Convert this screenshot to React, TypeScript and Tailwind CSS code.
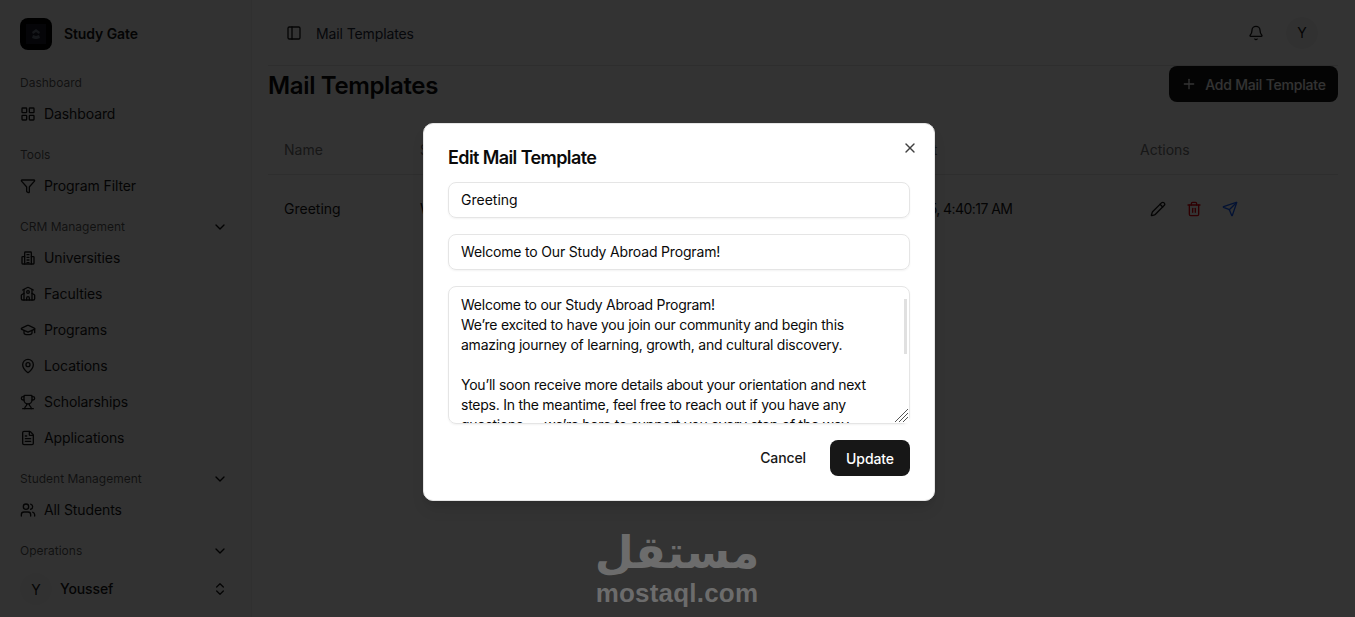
import React from "react";
import {
  Bell, ChevronDown, ChevronsUpDown, FileText, Funnel, GraduationCap, LayoutGrid, MapPin,
  PanelLeft, Pencil, Plus, School, Send, Trash2, Trophy, Users, X,
} from "lucide-react";

const font = "font-['Inter','Liberation_Sans',sans-serif]";

function UniversityIcon({ size = 16 }: { size?: number }) {
  return (
    <svg width={size} height={size} viewBox="0 0 24 24" fill="none" stroke="currentColor" strokeWidth="2" strokeLinecap="round" strokeLinejoin="round">
      <path d="M7 21V4a1 1 0 0 1 1-1h8a1 1 0 0 1 1 1v17" />
      <path d="M7 10H4a1 1 0 0 0-1 1v9a1 1 0 0 0 1 1h16a1 1 0 0 0 1-1v-9a1 1 0 0 0-1-1h-3" />
      <path d="M10.5 7h3M10.5 11h3M10.5 15h3M10.5 19h3" />
    </svg>
  );
}

function Label({ text, chevron }: { text: string; chevron?: boolean }) {
  return (
    <div className="flex h-[26px] items-center justify-between pr-[23px] text-[12px] text-[#0a0a0a]/70">
      <span>{text}</span>
      {chevron && <ChevronDown size={16} strokeWidth={2} className="text-[#0a0a0a]" />}
    </div>
  );
}

function Item({ icon: Icon, text }: { icon: any; text: string }) {
  return (
    <div className="flex h-9 items-center gap-2 text-[14px] text-[#171717]">
      <Icon size={16} strokeWidth={2} />
      <span className="mb-px tracking-[-0.1px]">{text}</span>
    </div>
  );
}

function Sidebar() {
  return (
    <aside className="flex h-full w-[252px] shrink-0 flex-col border-r border-[#f0f0f0] bg-[#fafafa] pl-5">
      <div className="flex h-[70px] items-center gap-3 pb-[2px]">
        <div className="flex h-8 w-8 items-center justify-center rounded-lg bg-black">
          <svg width="20" height="20" viewBox="0 0 20 20">
            <rect width="20" height="20" fill="#1a1d2b" />
            <path d="M10 5l4 3-1 2-3-2-3 2-1-2zM7 11l3 1 3-1 1 3-3 1h-2l-3-1z" fill="#6b7280" />
          </svg>
        </div>
        <span className="mb-[2px] text-[14px] font-semibold tracking-[-0.1px] text-[#171717]">Study Gate</span>
      </div>
      <div className="flex flex-1 flex-col gap-[10px] overflow-hidden">
        <section>
          <Label text="Dashboard" />
          <Item icon={LayoutGrid} text="Dashboard" />
        </section>
        <section>
          <Label text="Tools" />
          <Item icon={Funnel} text="Program Filter" />
        </section>
        <section>
          <Label text="CRM Management" chevron />
          <Item icon={UniversityIcon} text="Universities" />
          <Item icon={School} text="Faculties" />
          <Item icon={GraduationCap} text="Programs" />
          <Item icon={MapPin} text="Locations" />
          <Item icon={Trophy} text="Scholarships" />
          <Item icon={FileText} text="Applications" />
        </section>
        <section>
          <Label text="Student Management" chevron />
          <Item icon={Users} text="All Students" />
        </section>
        <section>
          <Label text="Operations" chevron />
        </section>
      </div>
      <div className="mb-3 flex h-8 items-center pr-[23px]">
        <div className="flex h-8 w-8 items-center justify-center rounded-full bg-[#f5f5f5] text-[14px] text-[#171717]">Y</div>
        <span className="mb-px ml-2 flex-1 text-[14px] font-medium tracking-[-0.1px] text-[#171717]">Youssef</span>
        <ChevronsUpDown size={16} className="text-[#171717]" />
      </div>
    </aside>
  );
}

function Main() {
  return (
    <main className="flex min-w-0 flex-1 flex-col pl-4 pr-[17px]">
      <header className="flex h-[66px] shrink-0 items-center border-b border-[#e5e5e5] pl-[18px] pr-5">
        <PanelLeft size={16} className="text-[#171717]" />
        <span className="ml-[14px] mt-[2px] flex-1 text-[14px] tracking-[-0.11px] text-[#1e2939]">Mail Templates</span>
        <Bell size={16} className="mr-[22px] text-[#171717]" />
        <div className="flex h-8 w-8 items-center justify-center rounded-full bg-[#f5f5f5] text-[14px] text-[#171717]">Y</div>
      </header>
      <div className="flex h-[36px] items-center justify-between">
        <h1 className="mt-[3px] text-[24px] font-semibold tracking-[-0.35px] text-[#0a0a0a]">Mail Templates</h1>
        <button className="flex h-9 w-[169px] items-center justify-center gap-2 rounded-lg bg-[#171717] text-[14px] font-medium tracking-[-0.2px] text-white">
          <Plus size={16} />
          Add Mail Template
        </button>
      </div>
      <table className="mt-[24px] w-full table-fixed text-left text-[14px]">
        <colgroup>
          <col className="w-[136px]" />
          <col className="w-[454px]" />
          <col className="w-[266px]" />
          <col />
        </colgroup>
        <thead>
          <tr className="h-[48px] border-b border-[#e5e5e5] text-[#737373]">
            <th className="px-4 font-normal">Name</th>
            <th className="px-4 font-normal">Subject</th>
            <th className="px-4 font-normal tracking-[-0.8px]">Created At</th>
            <th className="px-4 font-normal">Actions</th>
          </tr>
        </thead>
        <tbody>
          <tr className="h-[70px] text-[#171717]">
            <td className="px-4 pb-[2px]">Greeting</td>
            <td className="px-4 pb-[2px]">Welcome to Our Study Abroad Program!</td>
            <td className="px-4 pb-[2px] tracking-[-0.55px]">10/5/2025, 4:40:17 AM</td>
            <td className="px-4">
              <div className="flex">
                <span className="flex h-9 w-9 items-center justify-center"><Pencil size={16} /></span>
                <span className="flex h-9 w-9 items-center justify-center text-[#e7000b]"><Trash2 size={16} /></span>
                <span className="flex h-9 w-9 items-center justify-center text-[#155dfc]"><Send size={16} /></span>
              </div>
            </td>
          </tr>
        </tbody>
      </table>
    </main>
  );
}

const body = `Welcome to our Study Abroad Program!
We’re excited to have you join our community and begin this
amazing journey of learning, growth, and cultural discovery.

You’ll soon receive more details about your orientation and next
steps. In the meantime, feel free to reach out if you have any
questions — we’re here to support you every step of the way.`;

function Modal() {
  return (
    <div className="absolute left-[423px] top-[123px] flex w-[512px] flex-col gap-4 rounded-[10px] border border-[#e5e5e5] bg-white p-6 shadow-lg">
      <h2 className="h-[18px] text-[18px] font-semibold leading-[20px] tracking-[-0.6px] text-[#0a0a0a]">Edit Mail Template</h2>
      <X size={16} className="absolute right-[16px] top-[16px] text-[#404040]" />
      <input
        readOnly
        value="Greeting"
        className="h-9 rounded-lg border border-[#e5e5e5] px-3 pb-[2px] text-[14px] text-[#0a0a0a] shadow-xs outline-none"
      />
      <input
        readOnly
        value="Welcome to Our Study Abroad Program!"
        className="h-9 rounded-lg border border-[#e5e5e5] px-3 pb-[2px] text-[14px] tracking-[-0.17px] text-[#0a0a0a] shadow-xs outline-none"
      />
      <div className="relative">
        <textarea
          readOnly
          value={body}
          wrap="off"
          className="block h-[138px] w-full resize-none overflow-hidden rounded-lg border border-[#e5e5e5] px-3 py-2 text-[14px] leading-5 tracking-[-0.25px] text-[#0a0a0a] shadow-xs outline-none"
        />
        <div className="absolute right-[3px] top-[13px] h-[55px] w-[3px] bg-[#e0e0e0]" />
        <svg className="absolute bottom-[1px] right-[1px] bg-white" width="15" height="15" viewBox="0 0 15 15" stroke="#555" strokeWidth="1">
          <path d="M1 14L14 1M5 14L14 5M9 14L14 9" />
        </svg>
      </div>
      <div className="flex items-center justify-end gap-2">
        <button className="h-9 px-4 pb-px text-[14px] font-medium tracking-[-0.1px] text-[#171717]">Cancel</button>
        <button className="h-9 w-[80px] rounded-lg bg-[#171717] text-[14px] font-medium tracking-[-0.1px] text-white">Update</button>
      </div>
    </div>
  );
}

function Watermark() {
  return (
    <div className="absolute left-[577px] top-[521px] flex w-[200px] flex-col items-center text-[#6c6c6c]">
      <div dir="rtl" className="h-[58px] font-['DejaVu_Sans',sans-serif] text-[45px] font-bold leading-[64px]">مستقل</div>
      <div className="font-['Liberation_Sans',sans-serif] text-[26px] font-bold leading-[28px] tracking-[0.2px]">mostaql.com</div>
    </div>
  );
}

export default function App() {
  return (
    <div className={`relative flex h-screen w-full overflow-hidden bg-white ${font}`}>
      <Sidebar />
      <Main />
      <div className="absolute inset-0 bg-black/80" />
      <Modal />
      <Watermark />
    </div>
  );
}
